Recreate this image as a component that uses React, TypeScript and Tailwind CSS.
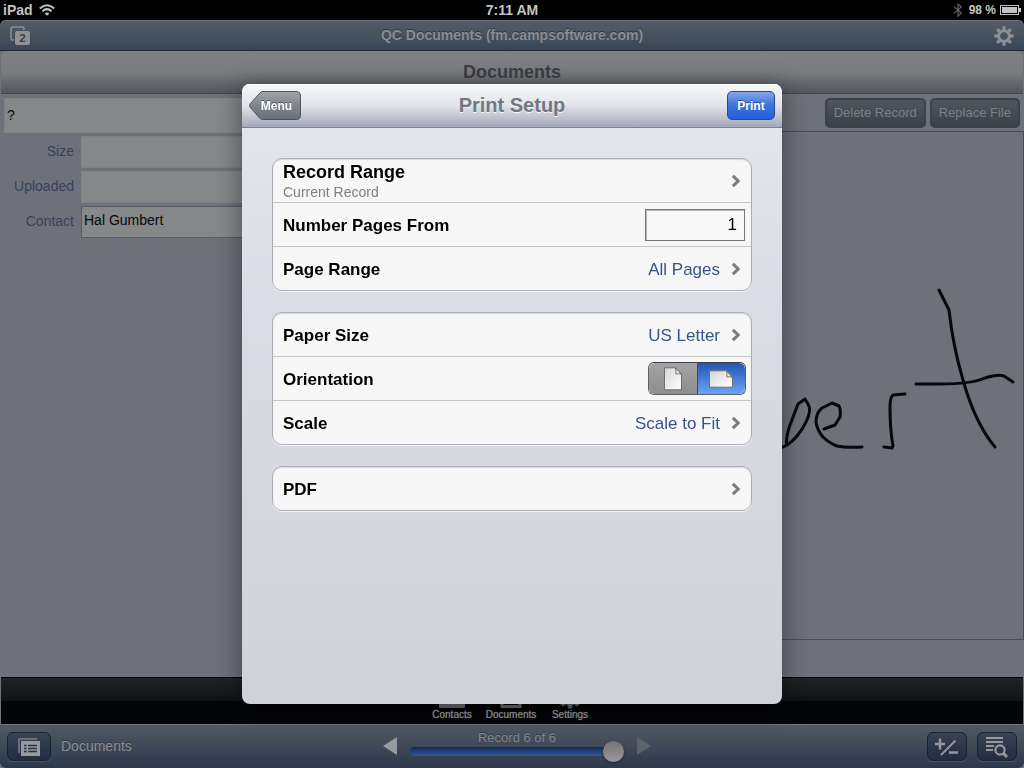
import { useState } from "react";
import type { ReactNode } from "react";

function Chevron() {
  return (
    <svg className="h-3 w-2.5 shrink-0" viewBox="0 0 10 12" fill="none" aria-hidden="true">
      <path d="M1.8 .8 L7.2 6 L1.8 11.200" stroke="#7b7b7b" strokeWidth="3" />
    </svg>
  );
}

function Group({ children }: { children: ReactNode }) {
  return (
    <div className="divide-y divide-[#c3c4c8] overflow-hidden rounded-[10px] border border-[#abaeb6] bg-[#f7f7f7] shadow-[0_1px_0_#f4f5f8,inset_0_1px_1px_#d9dade]">
      {children}
    </div>
  );
}

const rowLabel = "pt-0.5 text-[17px] leading-6 font-bold text-black";

function LinkRow({ label, detail, value }: { label: string; detail?: string; value?: string }) {
  return (
    <button type="button" className="flex h-11 w-full items-center justify-between px-2.5 text-left last:h-[43px]">
      {detail ? (
        <span className="flex flex-col">
          <span className="text-[18px] leading-[22px] font-bold text-black">{label}</span>
          <span className="text-[14px] leading-[18px] text-[#808080]">{detail}</span>
        </span>
      ) : (
        <span className={rowLabel}>{label}</span>
      )}
      <span className="flex items-center gap-[11px]">
        {value && <span className="pt-0.5 text-[17px] leading-6 text-[#385487]">{value}</span>}
        <Chevron />
      </span>
    </button>
  );
}

const segment =
  "flex flex-1 cursor-pointer items-center justify-center bg-linear-to-b from-[#a3a3a3] to-[#8d8d8d] has-checked:from-[#2456b0] has-checked:to-[#6aa4f8]";
const segmentInput = "absolute size-px appearance-none opacity-0";

function OrientationControl() {
  const [value, setValue] = useState("landscape");
  return (
    <fieldset
      aria-label="Orientation"
      className="relative flex h-[33px] w-[98px] overflow-hidden rounded-md border border-[#5c5f66] border-t-[#3c4048]"
    >
      <label className={segment}>
        <input
          className={segmentInput}
          type="radio"
          name="orientation"
          aria-label="Portrait"
          checked={value === "portrait"}
          onChange={() => setValue("portrait")}
        />
        <svg className="h-6 w-5" viewBox="0 0 20 24" aria-hidden="true">
          <defs>
            <linearGradient id="page" x1="0" y1="0" x2="1" y2="1">
              <stop offset="0" stopColor="#d4d4d4" />
              <stop offset=".7" stopColor="#f4f4f4" />
              <stop offset="1" stopColor="#fff" />
            </linearGradient>
          </defs>
          <path d="M1.500 .8 H12.500 L18.500 7.500 V22.800 H1.500 Z" fill="url(#page)" stroke="#6e6e6e" />
          <path d="M12.500 1 Q13.400 4 12.800 7 Q16 6.200 18.500 7.500 Z" fill="#fafafa" stroke="#6e6e6e" />
        </svg>
      </label>
      <label className={segment + " border-l border-[#444b5a]"}>
        <input
          className={segmentInput}
          type="radio"
          name="orientation"
          aria-label="Landscape"
          checked={value === "landscape"}
          onChange={() => setValue("landscape")}
        />
        <svg className="h-[18px] w-6" viewBox="0 0 24 18" aria-hidden="true">
          <path d="M.500 .8 H17.500 L23.500 7.500 V17.200 H.500 Z" fill="url(#page)" stroke="#776f62" />
          <path d="M17.500 1 Q18.400 4 17.800 7 Q21 6.200 23.500 7.500 Z" fill="#fafafa" stroke="#776f62" />
        </svg>
      </label>
    </fieldset>
  );
}

function PrintSetup() {
  return (
    <section
      role="dialog"
      aria-labelledby="print-setup"
      className="flex min-h-[620px] w-[540px] max-w-full flex-col overflow-hidden rounded-lg bg-linear-to-b from-[#e4e7eb] via-[#dadde5] via-35% to-[#d1d2d8] shadow-[0_4px_24px_2px_rgba(0,0,0,0.4)]"
    >
      <header className="grid h-11 grid-cols-[1fr_auto_1fr] items-center border-b border-[#7e8194] bg-linear-to-b from-[#f7f8fa] via-[#e3e4e9] to-[#a5a8b8] px-[7px] shadow-[inset_0_1px_0_#fff]">
        <button type="button" className="relative flex h-[30px] w-[53px] items-center justify-center pl-0.5">
          <svg className="absolute inset-0 h-full w-full" viewBox="0 0 53 30" aria-hidden="true">
            <defs>
              <linearGradient id="back" x1="0" y1="0" x2="0" y2="1">
                <stop offset="0" stopColor="#a0a4aa" />
                <stop offset=".5" stopColor="#80868e" />
                <stop offset="1" stopColor="#696f79" />
              </linearGradient>
            </defs>
            <path
              d="M12 1 Q13 .500 14 .500 H47 Q51.500 .500 51.500 5 V24.500 Q51.500 28.500 47 28.500 H14 Q12 28.500 10.500 27 L1 16 Q0 14.500 1 13 L10 3 Q11 1.500 12 1 Z"
              fill="url(#back)"
              stroke="#50555d"
            />
          </svg>
          <span className="relative text-[12px] leading-4 font-bold text-white [text-shadow:0_-1px_0_#50555d]">Menu</span>
        </button>
        <h2 id="print-setup" className="pb-0.5 text-[20px] leading-6 font-bold text-[#717880] [text-shadow:0_1px_0_#f2f3f6]">
          Print Setup
        </h2>
        <button
          type="button"
          className="h-[29px] w-12 justify-self-end rounded-[5px] border border-[#284a8c] bg-linear-to-b from-[#86a5ea] via-[#3c70dc] to-[#2160dd] text-[12px] leading-4 font-bold text-white [text-shadow:0_-1px_0_#2a4c93]"
        >
          Print
        </button>
      </header>
      <div className="flex flex-col gap-[21px] p-[30px]">
        <Group>
          <LinkRow label="Record Range" detail="Current Record" />
          <div className="flex h-11 items-center justify-between pr-1.5 pl-2.5">
            <label htmlFor="first-page" className={rowLabel}>
              Number Pages From
            </label>
            <input
              id="first-page"
              inputMode="numeric"
              defaultValue="1"
              className="h-8 w-[100px] border border-[#777] bg-[#f9f9f9] px-[7px] text-right text-[17px] leading-6 text-black outline-none shadow-[inset_1px_1px_0_#b5b5b5]"
            />
          </div>
          <LinkRow label="Page Range" value="All Pages" />
        </Group>
        <Group>
          <LinkRow label="Paper Size" value="US Letter" />
          <div className="flex h-11 items-center justify-between pr-[5px] pl-2.5">
            <span className={rowLabel}>Orientation</span>
            <OrientationControl />
          </div>
          <LinkRow label="Scale" value="Scale to Fit" />
        </Group>
        <Group>
          <LinkRow label="PDF" />
        </Group>
      </div>
    </section>
  );
}

function StatusBar() {
  return (
    <div className="grid h-5 grid-cols-3 items-center bg-black px-[3px] text-[14px] leading-[18px] font-bold text-[#c4c4c4]">
      <div className="flex items-center gap-1.5">
        <span>iPad</span>
        <svg className="h-3 w-4" viewBox="0 0 16 12" fill="none" stroke="#c4c4c4" aria-hidden="true">
          <path d="M.8 4.600 Q8 -2 15.200 4.600" strokeWidth="2" />
          <path d="M3.400 7.300 Q8 3 12.600 7.300" strokeWidth="2" />
          <path d="M8 11.800 L5.600 9.400 Q8 7.400 10.400 9.400 Z" fill="#c4c4c4" stroke="none" />
        </svg>
      </div>
      <div className="text-center">7:11 AM</div>
      <div className="flex items-center justify-end gap-1">
        <svg className="mr-0.5 h-3.5 w-2.5" viewBox="0 0 10 14" fill="none" stroke="#5c5c5c" strokeWidth="1.3" aria-hidden="true">
          <path d="M1 3.800 L8.300 10 L5 13 V1 L8.300 4 L1 10.200" />
        </svg>
        <span className="text-[12px]">98 %</span>
        <svg className="h-2.5 w-[21px]" viewBox="0 0 21 10" aria-hidden="true">
          <rect x=".5" y=".5" width="18" height="9" fill="none" stroke="#c4c4c4" />
          <rect x="2" y="2" width="15" height="6" fill="#c4c0c4" />
          <path d="M19 3 h2 v4 h-2 z" fill="#c4c4c4" />
        </svg>
      </div>
    </div>
  );
}

function Gear({ className }: { className: string }) {
  return (
    <svg className={className} viewBox="0 0 20 20" aria-hidden="true">
      <g fill="#8c8e91">
        {[0, 45, 90, 135].map((a) => (
          <path
            key={a}
            d="M8.500 0.300 H11.500 L12 6 H8 Z M8 14 H12 L11.500 19.700 H8.500 Z"
            transform={`rotate(${a} 10 10)`}
          />
        ))}
      </g>
      <circle cx="10" cy="10" r="5.300" fill="none" stroke="#8c8e91" strokeWidth="3" />
    </svg>
  );
}

function Field({ id, label, value, boxed }: { id: string; label: string; value?: string; boxed?: boolean }) {
  return (
    <div className="flex items-center">
      <label htmlFor={id} className="w-[74px] shrink-0 pb-0.5 text-right text-[14px] leading-[30px] text-[#3a4058]">
        {label}
      </label>
      <input
        id={id}
        defaultValue={value}
        className={
          boxed
            ? "ml-[7px] h-8 min-w-0 flex-1 border border-[#5a5c62] bg-[#868789] px-0.5 pb-1 text-[14px] leading-5 text-[#08080a] outline-none"
            : "ml-[7px] h-8 min-w-0 flex-1 border border-[#808185] bg-[#868789] px-0.5 text-[14px] leading-5 text-[#08080a] outline-none"
        }
      />
    </div>
  );
}

function Signature() {
  return (
    <svg
      className="h-[230px] w-[254px]"
      viewBox="-1 1 254 230"
      fill="none"
      stroke="#07080a"
      strokeWidth="3"
      strokeLinecap="round"
      strokeLinejoin="round"
      aria-hidden="true"
    >
      <path d="M4 177 H13 L17 175 Q28 168 36 152 Q42 140 38 134 L35 129 L28 134 L20 155 Q15 170 17 175" />
      <path d="M54 159 L65 155 L70 147 Q71 140 69 136 L62 133 L52 138 Q46 143 46 152 Q47 160 53 167 Q59 173 67 176 Q76 178 92 177" />
      <path d="M135 124 L123 125 Q120 127 120 137 Q120 160 123 176 L122 178 L114 177" />
      <path d="M169 20 L179 40 Q183 76 193 110 Q205 153 225 177" />
      <path d="M146 114 H170 Q202 114 215 108 Q228 104 234 106 L243 112" />
    </svg>
  );
}

const tabIcon = "h-3 w-[26px]";
const tabLink =
  "flex w-[59px] flex-col items-center text-[10px] leading-3 text-[#9a9b9d] [text-shadow:0_0_1px_#77787a]";

function Tabs() {
  return (
    <nav className="mx-px flex h-[47px] items-end justify-center border-t border-black bg-[#040508] bg-linear-to-b from-[#222326] to-[#111214] bg-[length:100%_23px] bg-no-repeat pr-0.5 pb-[3px]">
      <a href="#contacts" className={tabLink}>
        <svg className={tabIcon} viewBox="0 0 26 12" aria-hidden="true">
          <rect width="26" height="11" rx="1" fill="#68696d" />
        </svg>
        Contacts
      </a>
      <a href="#documents" className={tabLink}>
        <svg className={tabIcon} viewBox="0 0 26 12" aria-hidden="true">
          <path d="M4 0 V9.500 H22 V0" fill="none" stroke="#68696d" strokeWidth="3" />
        </svg>
        Documents
      </a>
      <a href="#settings" className={tabLink}>
        <svg className={tabIcon} viewBox="0 0 26 12" aria-hidden="true">
          <path d="M2 0 H22 L23 7 L20 9.500 L17 7.500 L15.500 8 L15 11.500 H11 L10.500 8 L9 7.500 L6 9.500 L3 7 Z" fill="#68696d" />
        </svg>
        Settings
      </a>
    </nav>
  );
}

const toolButton =
  "flex h-[29px] items-center justify-center rounded-md border border-[#1a2230] bg-linear-to-b from-[#3a4353] to-[#1f2c43] shadow-[0_1px_0_#4a5566]";

function Toolbar() {
  return (
    <footer className="grid h-11 grid-cols-[1fr_auto_1fr] items-center rounded-b-md border-t border-[#71757c] bg-linear-to-b from-[#535962] to-[#2b384c] px-[7px]">
      <div className="flex items-center gap-2.5">
        <button type="button" aria-label="Layouts" className={toolButton + " w-11"}>
          <svg className="h-[18px] w-[22px]" viewBox="0 0 22 18" aria-hidden="true">
            <path d="M0 0 H19 V2 H2 V15 H0 Z" fill="#696e78" />
            <rect x="3" y="3" width="19" height="15" fill="#97999c" />
            <path
              d="M6 7.500 H8.500 M10 7.500 H19 M6 10.500 H8.500 M10 10.500 H19 M6 13.500 H8.500 M10 13.500 H19"
              stroke="#273247"
              strokeWidth="1.500"
            />
          </svg>
        </button>
        <span className="pb-0.5 text-[14px] leading-5 text-[#8c8f94] [text-shadow:0_-1px_0_#2f3742]">Documents</span>
      </div>
      <div className="flex items-center gap-3 pb-px pl-2.5">
        <button type="button" aria-label="Previous record">
          <svg className="h-[18px] w-4" viewBox="0 0 16 18" aria-hidden="true">
            <path d="M15 0 V18 L1 9 Z" fill="#989a9d" />
          </svg>
        </button>
        <div className="flex w-[214px] flex-col items-center">
          <label htmlFor="record" className="text-[13px] leading-[14px] text-[#83878d] [text-shadow:0_-1px_0_#343c47]">
            Record 6 of 6
          </label>
          <input
            id="record"
            type="range"
            min={1}
            max={6}
            defaultValue={6}
            className="-mt-1 h-[21px] w-full appearance-none bg-transparent [&::-webkit-slider-runnable-track]:h-[9px] [&::-webkit-slider-runnable-track]:rounded-full [&::-webkit-slider-runnable-track]:bg-linear-to-b [&::-webkit-slider-runnable-track]:from-[#112a57] [&::-webkit-slider-runnable-track]:to-[#315793] [&::-webkit-slider-thumb]:-mt-1.5 [&::-webkit-slider-thumb]:size-[21px] [&::-webkit-slider-thumb]:appearance-none [&::-webkit-slider-thumb]:rounded-full [&::-webkit-slider-thumb]:bg-linear-to-b [&::-webkit-slider-thumb]:from-[#737373] [&::-webkit-slider-thumb]:to-[#999a9b] [&::-webkit-slider-thumb]:shadow-[0_1px_2px_#1c2430]"
          />
        </div>
        <button type="button" aria-label="Next record">
          <svg className="h-[18px] w-4" viewBox="0 0 16 18" aria-hidden="true">
            <path d="M1 0 V18 L15 9 Z" fill="#5b636d" />
          </svg>
        </button>
      </div>
      <div className="flex justify-end gap-2.5">
        <button type="button" aria-label="Add or delete record" className={toolButton + " w-10"}>
          <svg className="h-5 w-6" viewBox="0 0 24 20" fill="none" stroke="#97999c" aria-hidden="true">
            <path d="M0 7 H10 M5 1.500 V12.500 M14 15.500 H23" strokeWidth="2.400" />
            <path d="M6 18 L20.500 3.500" strokeWidth="1.800" />
          </svg>
        </button>
        <button type="button" aria-label="Find records" className={toolButton + " w-10"}>
          <svg className="h-[22px] w-[22px]" viewBox="0 0 22 22" fill="none" stroke="#97999c" aria-hidden="true">
            <path d="M0 2 H17 M0 6 H17 M0 10 H8 M0 14 H7" strokeWidth="2.200" />
            <circle cx="14" cy="14" r="4.600" strokeWidth="2.200" />
            <path d="M17 17 L21 21" strokeWidth="3" />
          </svg>
        </button>
      </div>
    </footer>
  );
}

const actionButton =
  "h-[30px] rounded-[5px] border-2 border-[#3c4147] bg-linear-to-b from-[#51565d] to-[#394149] px-[7px] text-[13px] leading-5 text-[#7d8085]";

export default function App() {
  return (
    <div className="flex min-h-screen flex-col bg-black font-['Liberation_Sans',Arial,sans-serif]">
      <StatusBar />
      <div className="flex flex-1 flex-col rounded-t-md bg-[#6e717a]">
        <header className="grid h-[31px] grid-cols-[1fr_auto_1fr] items-center rounded-t-md border-t border-b border-t-[#6b7079] border-b-[#24282e] bg-linear-to-b from-[#575c65] to-[#384557] px-2.5">
          <button type="button" aria-label="Open files" className="justify-self-start">
            <svg className="h-5 w-[21px]" viewBox="0 0 21 20" aria-hidden="true">
              <path
                d="M4 14 H2.500 Q1 14 1 12.500 V2.500 Q1 1 2.500 1 H12.500 Q14 1 14 2.500 V4"
                fill="none"
                stroke="#8c8f93"
                strokeWidth="1.600"
              />
              <rect x="5" y="5" width="15" height="14" rx="2" fill="#8f9194" />
              <text x="12.500" y="16" textAnchor="middle" fontSize="11" fontWeight="bold" fill="#343b47">
                2
              </text>
            </svg>
          </button>
          <h1 className="pb-px text-[14px] leading-5 font-bold text-[#8a8d91] [text-shadow:0_-1px_0_#2e3641]">
            QC Documents (fm.campsoftware.com)
          </h1>
          <button type="button" aria-label="Settings" className="justify-self-end">
            <Gear className="h-5 w-5" />
          </button>
        </header>
        <div className="mx-px flex h-[43px] items-center justify-center rounded-t-md border-b border-[#40434b] bg-linear-to-b from-[#7f8283] via-[#7a7c7f] to-[#54565f]">
          <h2 className="text-[18px] leading-6 font-bold text-[#3b3f46] [text-shadow:0_1px_0_#77797d]">Documents</h2>
        </div>
        <main className="flex flex-1">
          <div className="flex w-1/3 flex-col gap-[3px] pt-1 pl-1">
            <input
              aria-label="File"
              defaultValue="?"
              className="h-[35px] w-full border border-[#808185] bg-[#868789] px-0.5 pb-0.5 text-[14px] text-[#08080a] outline-none"
            />
            <div className="-ml-1 flex flex-col gap-[3px]">
              <Field id="size" label="Size" />
              <Field id="uploaded" label="Uploaded" />
              <Field id="contact" label="Contact" value="Hal Gumbert" boxed />
            </div>
          </div>
          <div className="flex flex-1 flex-col pt-1">
            <div className="flex h-[33px] justify-end gap-1 pr-1">
              <button type="button" className={actionButton}>
                Delete Record
              </button>
              <button type="button" className={actionButton}>
                Replace File
              </button>
            </div>
            <div className="flex flex-1 items-center justify-end border border-[#484b50]">
              <Signature />
            </div>
            <div className="h-[37px]" />
          </div>
        </main>
        <Tabs />
        <Toolbar />
      </div>
      <div className="fixed inset-x-0 top-5 bottom-0 flex items-center justify-center">
        <PrintSetup />
      </div>
    </div>
  );
}
